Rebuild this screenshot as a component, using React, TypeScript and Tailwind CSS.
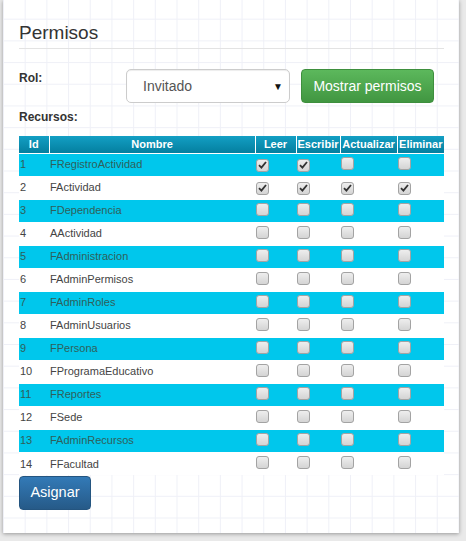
import React from 'react'

const RECURSOS = [
  'FRegistroActividad',
  'FActividad',
  'FDependencia',
  'AActividad',
  'FAdministracion',
  'FAdminPermisos',
  'FAdminRoles',
  'FAdminUsuarios',
  'FPersona',
  'FProgramaEducativo',
  'FReportes',
  'FSede',
  'FAdminRecursos',
  'FFacultad',
]

// [leer, escribir, actualizar, eliminar]
const CHECKED: Record<number, boolean[]> = {
  0: [true, true, false, false],
  1: [true, true, true, true],
}

function Check({ on }: { on: boolean }) {
  return (
    <span className="inline-flex h-[13px] w-[13px] items-center justify-center rounded-[3px] border border-[#a3a3a3] bg-[linear-gradient(#eeeeee,#d4d4d4)]">
      {on && (
        <svg width="9" height="8" viewBox="0 0 9 8">
          <path d="M1 4.2 L3.4 6.6 L8 1" fill="none" stroke="#333" strokeWidth="1.8" />
        </svg>
      )}
    </span>
  )
}

export default function App() {
  return (
    <div className="h-[541px] w-[466px] overflow-hidden bg-[#e9e9e9] pl-[3px]" style={{ fontFamily: '"Liberation Sans", Arial, sans-serif' }}>
      <div className="h-[533px] w-[456px] bg-white bg-[image:linear-gradient(to_right,#eff0f7_1px,transparent_1px),linear-gradient(to_bottom,#eff0f7_1px,transparent_1px)] bg-[size:21.7px_21.7px] bg-[position:0_-3px] px-[16px] shadow-[0_1px_4px_rgba(0,0,0,0.35)]">
        <div className="w-[425px] pt-[23px]">
          <h3 className="border-b border-[#e3e3e3] pb-[5px] text-[19px] leading-[20px] text-[#333]">Permisos</h3>

          <div className="mt-[20px] flex items-start">
            <label className="w-[107px] text-[12px] font-bold text-[#333]">Rol:</label>
            <div className="relative flex h-[34px] w-[164px] items-center rounded-[5px] border border-[#cccccc] bg-white pl-[16px] text-[14px] text-[#555] shadow-[inset_0_1px_1px_rgba(0,0,0,0.075)]">
              Invitado
              <span className="absolute right-[6px] top-[9px] text-[10px] text-[#111]">▼</span>
            </div>
            <button className="ml-[11px] h-[34px] w-[133px] rounded-[4px] border border-[#3e8f3e] bg-[linear-gradient(#5cb85c,#419641)] text-[14px] text-white">
              Mostrar permisos
            </button>
          </div>

          <div className="mt-[5px] text-[12px] font-bold text-[#333]">Recursos:</div>

          <table className="mt-[10px] w-[425px] border-collapse text-[11px]">
            <thead>
              <tr className="h-[17px] bg-[linear-gradient(#139fc4,#047f9f)] text-white">
                <th className="w-[30px] border-r border-white p-0 font-bold">Id</th>
                <th className="w-[206px] border-r border-white p-0 font-bold">Nombre</th>
                <th className="w-[41px] border-r border-white p-0 font-bold">Leer</th>
                <th className="w-[44px] border-r border-white p-0 font-bold">Escribir</th>
                <th className="w-[57px] border-r border-white p-0 font-bold">Actualizar</th>
                <th className="p-0 font-bold">Eliminar</th>
              </tr>
            </thead>
            <tbody>
              {RECURSOS.map((r, i) => {
                const c = CHECKED[i] ?? [false, false, false, false]
                return (
                  <tr key={r} className={`h-[23px] border-t border-white ${i % 2 === 0 ? 'bg-[#00c7ec] text-[#2f5f5a]' : 'bg-white text-[#444]'}`}>
                    <td className="p-0 pl-[1px] align-middle">{i + 1}</td>
                    <td className="p-0 pl-[1px] align-middle">{r}</td>
                    {c.map((v, j) => (
                      <td key={j} className="p-0 pl-[1px] pt-[2px] text-left align-middle">
                        <Check on={v} />
                      </td>
                    ))}
                  </tr>
                )
              })}
            </tbody>
          </table>

          <button className="mt-[1px] h-[34px] w-[72px] rounded-[4px] border border-[#245580] bg-[linear-gradient(#337ab7,#265a88)] text-[14.5px] text-white">
            Asignar
          </button>
        </div>
      </div>
    </div>
  )
}
